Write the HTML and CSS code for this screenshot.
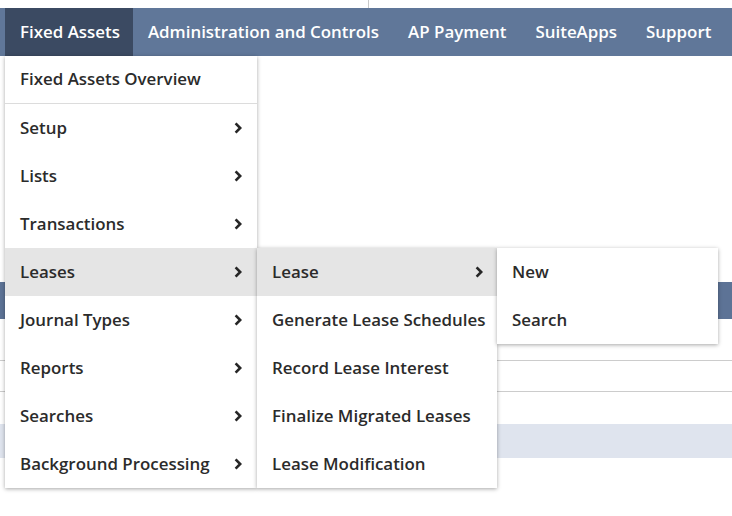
FILE: index.html
```html
<!DOCTYPE html>
<html lang="en">
<head>
<meta charset="utf-8">
<title>Fixed Assets menu</title>
<link rel="stylesheet" href="styles.css">
</head>
<body>
<div class="page">
  <div class="topstrip"><span class="tick"></span></div>
  <nav class="navbar">
    <a class="nav-item active">Fixed Assets</a>
    <a class="nav-item">Administration and Controls</a>
    <a class="nav-item">AP Payment</a>
    <a class="nav-item">SuiteApps</a>
    <a class="nav-item">Support</a>
  </nav>
  <div class="content">
    <div class="band band-dark"></div>
    <div class="rule rule-a"></div>
    <div class="rule rule-b"></div>
    <div class="band band-light"></div>
  </div>

  <ul class="menu menu-main">
    <li class="item overview"><span>Fixed Assets Overview</span></li>
    <li class="item"><span>Setup</span><svg class="chev" viewBox="0 0 8 12" width="8" height="12"><path d="M1.6 1.4 L6.2 6 L1.6 10.6"/></svg></li>
    <li class="item"><span>Lists</span><svg class="chev" viewBox="0 0 8 12" width="8" height="12"><path d="M1.6 1.4 L6.2 6 L1.6 10.6"/></svg></li>
    <li class="item"><span>Transactions</span><svg class="chev" viewBox="0 0 8 12" width="8" height="12"><path d="M1.6 1.4 L6.2 6 L1.6 10.6"/></svg></li>
    <li class="item hl"><span>Leases</span><svg class="chev" viewBox="0 0 8 12" width="8" height="12"><path d="M1.6 1.4 L6.2 6 L1.6 10.6"/></svg></li>
    <li class="item"><span>Journal Types</span><svg class="chev" viewBox="0 0 8 12" width="8" height="12"><path d="M1.6 1.4 L6.2 6 L1.6 10.6"/></svg></li>
    <li class="item"><span>Reports</span><svg class="chev" viewBox="0 0 8 12" width="8" height="12"><path d="M1.6 1.4 L6.2 6 L1.6 10.6"/></svg></li>
    <li class="item"><span>Searches</span><svg class="chev" viewBox="0 0 8 12" width="8" height="12"><path d="M1.6 1.4 L6.2 6 L1.6 10.6"/></svg></li>
    <li class="item"><span>Background Processing</span><svg class="chev" viewBox="0 0 8 12" width="8" height="12"><path d="M1.6 1.4 L6.2 6 L1.6 10.6"/></svg></li>
  </ul>

  <ul class="menu menu-sub">
    <li class="item hl"><span>Lease</span><svg class="chev" viewBox="0 0 8 12" width="8" height="12"><path d="M1.6 1.4 L6.2 6 L1.6 10.6"/></svg></li>
    <li class="item"><span>Generate Lease Schedules</span></li>
    <li class="item"><span>Record Lease Interest</span></li>
    <li class="item"><span>Finalize Migrated Leases</span></li>
    <li class="item"><span>Lease Modification</span></li>
  </ul>

  <ul class="menu menu-sub2">
    <li class="item"><span>New</span></li>
    <li class="item"><span>Search</span></li>
  </ul>
</div>
</body>
</html>
```
FILE: styles.css
```css
html, body {
  margin: 0;
  padding: 0;
  background: #ffffff;
}
.page {
  position: relative;
  width: 732px;
  height: 516px;
  overflow: hidden;
  font-family: "Open Sans", "Liberation Sans", sans-serif;
}
.topstrip {
  height: 8px;
  position: relative;
}
.tick {
  position: absolute;
  left: 368px;
  top: 0;
  width: 1px;
  height: 8px;
  background: #c9c9c9;
}
.navbar {
  display: flex;
  height: 48px;
  background: #607799;
  padding-left: 5px;
}
.nav-item {
  display: flex;
  align-items: center;
  padding: 0 14px 2px 15px;
  color: #ffffff;
  font-size: 16.9px;
  font-weight: 600;
  white-space: nowrap;
}
.nav-item.active {
  background: #3b4a62;
  padding-right: 13px;
}
.content {
  display: flex;
  flex-direction: column;
}
.band-dark {
  margin-top: 226px;
  height: 37px;
  background: #5d7396;
}
.rule {
  height: 1px;
  background: #cccccc;
}
.rule-a { margin-top: 41px; }
.rule-b { margin-top: 30px; }
.band-light {
  margin-top: 32px;
  height: 34px;
  background: #dfe4ee;
}
.menu {
  position: absolute;
  margin: 0;
  padding: 0;
  list-style: none;
  background: #ffffff;
  box-shadow: 0 1px 4px rgba(0, 0, 0, 0.35);
}
.menu-main {
  left: 5px;
  top: 56px;
  width: 252px;
  z-index: 1;
}
.menu-sub {
  left: 257px;
  top: 248px;
  width: 240px;
  z-index: 2;
}
.menu-sub2 {
  left: 497px;
  top: 248px;
  width: 221px;
  z-index: 3;
}
.item {
  display: flex;
  align-items: center;
  justify-content: space-between;
  height: 48px;
  padding: 0 15px 0 15px;
  color: #2b2b2b;
  font-size: 16.9px;
  font-weight: 600;
  white-space: nowrap;
  box-sizing: border-box;
}
.item span {
  margin-bottom: 2px;
}
.item.overview {
  border-bottom: 1px solid #dcdcdc;
}
.item.hl {
  background: #e5e5e5;
}
.menu-sub .item {
  padding-right: 14px;
}
.chev {
  flex: none;
  fill: none;
  stroke: #262626;
  stroke-width: 2.6;
  stroke-linecap: butt;
  stroke-linejoin: miter;
}
```
